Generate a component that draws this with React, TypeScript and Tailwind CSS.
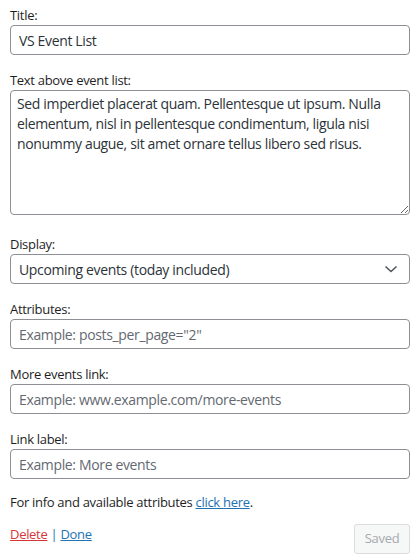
import React from "react";

const font = { fontFamily: '"Open Sans", "Noto Sans", sans-serif' };

function Label({ children }: { children: React.ReactNode }) {
  return (
    <label className="block text-[13px] leading-[20px] tracking-[-0.3px] text-[#1e1e1e]">{children}</label>
  );
}

function Input({ value, placeholder }: { value?: string; placeholder?: string }) {
  return (
    <input
      type="text"
      defaultValue={value}
      placeholder={placeholder}
      className="block w-full h-[30px] rounded-[4px] border border-[#8c8f94] bg-white px-[8px] text-[14px] tracking-[-0.35px] text-[#2c3338] placeholder:text-[#646970] outline-none"
    />
  );
}

export default function App() {
  return (
    <div className="w-[420px] h-[560px] bg-white px-[10px] pt-[5px]" style={font}>
      <div>
        <Label>Title:</Label>
        <Input value="VS Event List" />
      </div>
      <div className="mt-[15px]">
        <Label>Text above event list:</Label>
        <textarea
          rows={6}
          defaultValue="Sed imperdiet placerat quam. Pellentesque ut ipsum. Nulla elementum, nisl in pellentesque condimentum, ligula nisi nonummy augue, sit amet ornare tellus libero sed risus."
          className="block w-full h-[125px] rounded-[4px] border border-[#8c8f94] bg-white px-[6px] py-[3px] text-[14px] leading-[20px] tracking-[-0.35px] text-[#2c3338] outline-none"
        />
      </div>
      <div className="mt-[19px]">
        <Label>Display:</Label>
        <div className="relative">
          <select
            defaultValue="upcoming"
            className="block w-full h-[30px] appearance-none rounded-[4px] border border-[#8c8f94] bg-white pl-[8px] pr-[24px] text-[14px] tracking-[-0.35px] text-[#2c3338] outline-none"
          >
            <option value="upcoming">Upcoming events (today included)</option>
          </select>
          <svg
            className="pointer-events-none absolute right-[12px] top-[11px]"
            width="14"
            height="8"
            viewBox="0 0 14 8"
          >
            <path d="M1.5 1.5 L7 6.5 L12.5 1.5" fill="none" stroke="#50575e" strokeWidth="1.6" />
          </svg>
        </div>
      </div>
      <div className="mt-[15px]">
        <Label>Attributes:</Label>
        <Input placeholder='Example: posts_per_page="2"' />
      </div>
      <div className="mt-[15px]">
        <Label>More events link:</Label>
        <Input placeholder="Example: www.example.com/more-events" />
      </div>
      <div className="mt-[15px]">
        <Label>Link label:</Label>
        <Input placeholder="Example: More events" />
      </div>
      <p className="mt-[13px] text-[13px] leading-[20px] tracking-[-0.3px] text-[#1e1e1e]">
        For info and available attributes{" "}
        <a href="#" className="text-[#2271b1] underline">
          click here
        </a>
        .
      </p>
      <div className="mt-[12px] flex items-start justify-between">
        <div className="text-[13px] leading-[20px] tracking-[-0.3px]">
          <a href="#" className="text-[#d63638] underline">
            Delete
          </a>
          <span className="text-[#2271b1]"> | </span>
          <a href="#" className="text-[#2271b1] underline">
            Done
          </a>
        </div>
        <button
          disabled
          className="h-[30px] w-[56px] rounded-[3px] border border-[#dcdcde] bg-[#f6f7f7] text-[13px] tracking-[-0.3px] text-[#a7aaad]"
        >
          Saved
        </button>
      </div>
    </div>
  );
}
